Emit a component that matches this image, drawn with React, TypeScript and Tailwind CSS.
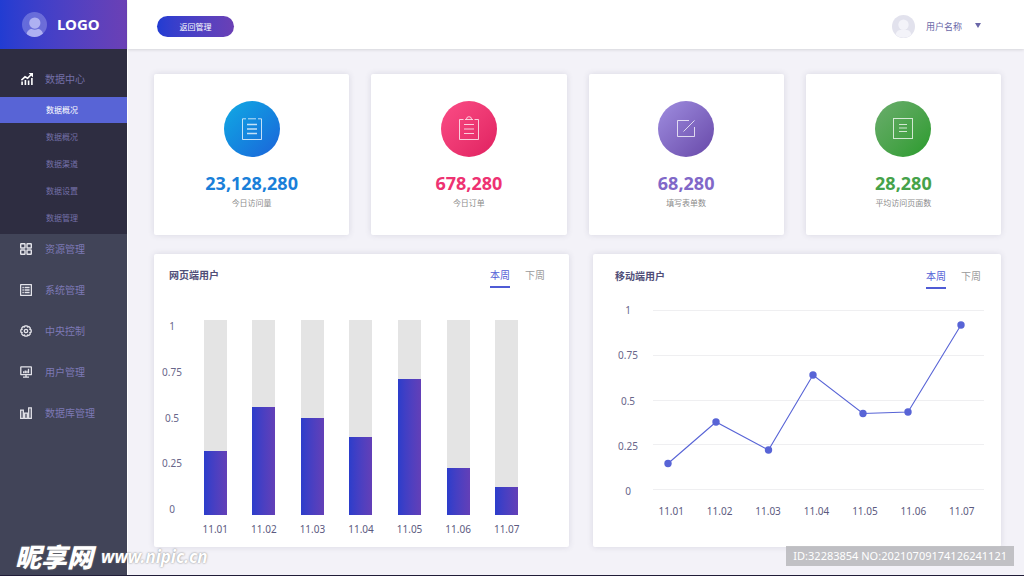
import React, { useState } from 'react';

const subMenu = ['数据概况', '数据概况', '数据渠道', '数据设置', '数据管理'];

const TrendIcon = () => (
  <svg viewBox="0 0 12 12" className="w-3 h-3" fill="none" stroke="currentColor">
    <path d="M1.1 8.6v3.4M4.4 7v5M7.6 7.6v4.4M10.9 5v7" strokeWidth="1.6" />
    <path d="M0.4 7.2 4 3.8l2.6 1.5L10 1.8" strokeWidth="1.6" />
    <path d="M7.6 0H12v4.4z" fill="currentColor" stroke="none" />
  </svg>
);

const GridIcon = () => (
  <svg viewBox="0 0 12 12" className="w-3 h-3" fill="none" stroke="currentColor" strokeWidth="1.4">
    <rect x="0.7" y="0.7" width="4.3" height="4.3" rx="0.5" />
    <rect x="7" y="0.7" width="4.3" height="4.3" rx="0.5" />
    <rect x="0.7" y="7" width="4.3" height="4.3" rx="0.5" />
    <rect x="7" y="7" width="4.3" height="4.3" rx="0.5" />
  </svg>
);

const ListIcon = () => (
  <svg viewBox="0 0 12 12" className="w-3 h-3" fill="none" stroke="currentColor" strokeWidth="1.3">
    <rect x="0.6" y="0.6" width="10.8" height="10.8" rx="0.4" />
    <path d="M2.4 3.5h1.4M4.6 3.5h5M2.4 6h1.4M4.6 6h5M2.4 8.5h1.4M4.6 8.5h5" />
  </svg>
);

const GearIcon = () => (
  <svg viewBox="0 0 12 12" className="w-3 h-3" fill="none" stroke="currentColor" strokeWidth="1.3" strokeLinejoin="round">
    <path d="M4.9 0.8h2.2l.4 1.3 1.3-.6 1.6 1.6-.6 1.3 1.4.5v2.2l-1.4.5.6 1.3-1.6 1.6-1.3-.6-.4 1.3H4.9l-.4-1.3-1.3.6-1.6-1.6.6-1.3L.8 7.1V4.9l1.4-.5-.6-1.3 1.6-1.6 1.3.6z" />
    <circle cx="6" cy="6" r="1.7" />
  </svg>
);

const MonitorIcon = () => (
  <svg viewBox="0 0 12 12" className="w-3 h-3" fill="none" stroke="currentColor" strokeWidth="1.3">
    <rect x="0.8" y="0.8" width="10.6" height="7.9" rx="0.4" />
    <path d="M3.7 7.2V5.2M5.3 7.2V4.4M6.9 7.2V4.8M8.5 7.2V2.8" />
    <path d="M6 8.6v2.4M3 11.2h6" />
  </svg>
);

const BarsIcon = () => (
  <svg viewBox="0 0 12 12" className="w-3 h-3" fill="none" stroke="currentColor" strokeWidth="1.3">
    <path d="M0.7 3.2h2.6v8.1H0.7zM4.7 6.2h2.6v5.1H4.7zM8.7 0.8h2.6v10.5H8.7z" />
  </svg>
);

const menu = [
  { label: '资源管理', icon: <GridIcon /> },
  { label: '系统管理', icon: <ListIcon /> },
  { label: '中央控制', icon: <GearIcon /> },
  { label: '用户管理', icon: <MonitorIcon /> },
  { label: '数据库管理', icon: <BarsIcon /> }
];

const stats = [
  {
    value: '23,128,280',
    label: '今日访问量',
    circle: 'bg-linear-to-br from-[#14aae3] to-[#1d62d9]',
    text: 'text-[#1a7fd9]',
    icon: (
      <>
        <path d="M4 .8H.5v20.7h19V.8H16M6 .8h8" />
        <path d="M5 6.5h10M5 11h10M5 15.5h10" strokeWidth="1.3" />
      </>
    )
  },
  {
    value: '678,280',
    label: '今日订单',
    circle: 'bg-linear-to-br from-[#fb4c86] to-[#e01f60]',
    text: 'text-[#ee3272]',
    icon: (
      <>
        <path d="M4.5 1.5H.5v20h19v-20h-4M6 1.5h8" />
        <path d="M7.5 1.2a2.5 2.5 0 1 1 5 0" />
        <path d="M5 6.5h10M5 11h10M5 15.5h10" strokeWidth="1.2" />
      </>
    )
  },
  {
    value: '68,280',
    label: '填写表单数',
    circle: 'bg-linear-to-br from-[#a08ee0] to-[#6848a8]',
    text: 'text-[#8168c8]',
    icon: (
      <>
        <path d="M13 2.5H1.5v16h17V9" />
        <path d="M7.5 13.5 18.5 2.5" />
      </>
    )
  },
  {
    value: '28,280',
    label: '平均访问页面数',
    circle: 'bg-linear-to-br from-[#6aad6c] to-[#279b2a]',
    text: 'text-[#46a24a]',
    icon: (
      <>
        <rect x=".5" y=".5" width="19" height="20" />
        <path d="M6 6.5h8M6 10h8M6 13.5h8" strokeWidth="1.2" />
      </>
    )
  }
];

const yLabels = ['1', '0.75', '0.5', '0.25', '0'];

const bars = [
  { date: '11.01', value: 33 },
  { date: '11.02', value: 55.5 },
  { date: '11.03', value: 50 },
  { date: '11.04', value: 40 },
  { date: '11.05', value: 70 },
  { date: '11.06', value: 24 },
  { date: '11.07', value: 14.5 }
];

const gridLines = [6.5, 51.5, 96.5, 140.5, 185.5];

const points = [
  [21, 159.5],
  [69, 118],
  [121.5, 146],
  [166, 71],
  [216, 109.5],
  [261, 108],
  [314, 21]
];

const Avatar = ({ className }: { className: string }) => (
  <svg viewBox="0 0 24 24" className={className}>
    <defs>
      <clipPath id="avatar">
        <circle cx="12" cy="12" r="12" />
      </clipPath>
    </defs>
    <circle cx="12" cy="12" r="12" fill="currentColor" opacity="0.3" />
    <g clipPath="url(#avatar)" fill="currentColor" opacity="0.65">
      <circle cx="12.3" cy="10.6" r="5.4" />
      <path d="M4.4 22c0-4 3-5.8 5-5.8 1.6 1 4.2 1 5.8 0 2 0 5 1.8 5 5.8v2H4.4z" />
    </g>
  </svg>
);

const PanelHeader = ({ title }: { title: string }) => {
  const [tab, setTab] = useState('本周');

  return (
    <div className="flex items-start justify-between">
      <h2 className="text-[10px] leading-5 font-bold text-[#504e78]">{title}</h2>
      <div className="flex gap-[15px]">
        {['本周', '下周'].map((name) => (
          <button
            key={name}
            type="button"
            onClick={() => setTab(name)}
            className={
              tab === name
                ? 'pb-px text-[10px] leading-5 text-[#4f5bd5] border-b-2 border-[#4f5bd5]'
                : 'pb-px text-[10px] leading-5 text-[#9a9a9a] border-b-2 border-transparent'
            }
          >
            {name}
          </button>
        ))}
      </div>
    </div>
  );
};

const YAxis = ({ className }: { className: string }) => (
  <div className={`flex flex-col justify-between w-5 shrink-0 text-center text-[10px] leading-3 text-[#68668a] ${className}`}>
    {yLabels.map((label) => (
      <span key={label}>{label}</span>
    ))}
  </div>
);

const App = () => {
  return (
    <div className="relative min-h-screen flex bg-[#f3f2f8] border-b border-[#201d38] font-['Noto_Sans','Noto_Sans_CJK_SC',sans-serif]">
      {/* Sidebar */}
      <aside className="w-[127px] shrink-0 bg-[#414458]">
        <div className="h-[49px] flex items-center gap-[10px] pl-[22px] bg-linear-to-r from-[#213cd2] to-[#6b40b5] text-white">
          <Avatar className="w-[25px] h-[25px] text-[#d5d6ff]" />
          <span className="text-[15px] font-bold">LOGO</span>
        </div>

        <nav>
          <div className="bg-[#2e2d41] pb-[3px]">
            <a href="#data" className="h-12 pt-3 pl-[21px] flex items-center gap-3 text-[10px] text-[#7470a8]">
              <span className="text-white"><TrendIcon /></span>
              数据中心
            </a>
            <ul className="flex flex-col gap-px">
              {subMenu.map((item, index) => (
                <li key={index}>
                  <a
                    href="#sub"
                    className={
                      index === 0
                        ? 'h-[26px] pb-px pl-[46px] flex items-center text-[8px] text-white bg-[#5864d6]'
                        : 'h-[26px] pb-px pl-[46px] flex items-center text-[8px] text-[#7470a8]'
                    }
                  >
                    {item}
                  </a>
                </li>
              ))}
            </ul>
          </div>

          <ul className="pt-px flex flex-col gap-[13px]">
            {menu.map((item) => (
              <li key={item.label}>
                <a href="#menu" className="h-7 pl-5 flex items-center gap-[13px] text-[10px] text-[#7d79b5]">
                  <span className="text-[#e4e4ea]">{item.icon}</span>
                  {item.label}
                </a>
              </li>
            ))}
          </ul>
        </nav>
      </aside>

      <div className="flex-1 min-w-0 border-l border-white">
        {/* Header */}
        <header className="h-[49px] pl-[29px] pr-[43px] pt-1 flex items-center justify-between bg-white shadow-[0_1px_3px_rgba(0,0,0,0.12)]">
          <button type="button" className="w-[77px] h-[21px] rounded-full bg-linear-to-r from-[#213cd2] to-[#6b40b5] text-[8px] text-white">
            返回管理
          </button>
          <button type="button" className="flex items-center text-[9px] text-[#6a67a8]">
            <svg viewBox="0 0 24 24" className="w-[23px] h-[23px] mr-[11px]">
              <circle cx="12" cy="12" r="12" fill="#e2e2ed" />
              <circle cx="12" cy="10.2" r="5.4" fill="#f3f3f9" />
              <path d="M3.8 20.5c.6-3.6 3.2-4.8 5-4.8h6.4c1.8 0 4.4 1.2 5 4.8A12 12 0 0 1 3.8 20.5z" fill="#f3f3f9" />
            </svg>
            用户名称
            <svg viewBox="0 0 6 5" className="w-[6px] h-[5px] ml-[13px] mb-[2px]">
              <path d="M0 0h6L3 5z" fill="currentColor" />
            </svg>
          </button>
        </header>

        <main className="pl-[26px] pr-[23px] pt-[25px] pb-7">
          {/* Stats */}
          <div className="grid grid-cols-4 gap-[22px]">
            {stats.map((stat) => (
              <div key={stat.label} className="h-[161px] pt-[27px] flex flex-col items-center bg-white rounded-xs shadow-[0_0_6px_rgba(60,60,90,0.14)]">
                <div className={`w-14 h-14 rounded-full flex items-center justify-center ${stat.circle}`}>
                  <svg viewBox="0 0 20 22" className="w-5 h-[22px] overflow-visible" fill="none" stroke="#ffffff" strokeOpacity="0.75" strokeWidth="1">
                    {stat.icon}
                  </svg>
                </div>
                <p className={`mt-4 text-[18px] leading-5 font-bold ${stat.text}`}>{stat.value}</p>
                <p className="mt-1 text-[8px] leading-3 text-[#8c8c8c]">{stat.label}</p>
              </div>
            ))}
          </div>

          {/* Charts */}
          <div className="mt-[19px] grid grid-cols-[415fr_408fr] gap-6">
            <section className="pt-[11px] pb-3 bg-white rounded-xs shadow-[0_0_6px_rgba(60,60,90,0.14)]">
              <div className="pl-[15px] pr-6">
                <PanelHeader title="网页端用户" />
              </div>
              <div className="mt-8 pl-2 pr-[38px] flex gap-[9px]">
                <YAxis className="h-[195px]" />
                <div className="flex-1 grid grid-cols-7">
                  {bars.map((bar) => (
                    <div key={bar.date} className="flex flex-col items-center">
                      <div className="w-[23px] h-[195px] flex items-end bg-[#e4e4e4]">
                        <div className="w-full bg-linear-to-r from-[#2b3dcb] to-[#633fb7]" style={{ height: `${bar.value}%` }}></div>
                      </div>
                      <span className="mt-2 text-[10px] leading-3 text-[#5c5a80]">{bar.date}</span>
                    </div>
                  ))}
                </div>
              </div>
            </section>

            <section className="pt-3 pb-[11px] bg-white rounded-xs shadow-[0_0_6px_rgba(60,60,90,0.14)]">
              <div className="pl-[22px] pr-5">
                <PanelHeader title="移动端用户" />
              </div>
              <div className="mt-[15px] pl-[25px] pr-[15px] flex gap-[9px]">
                <YAxis className="h-[193px]" />
                <div className="flex-1">
                  <svg viewBox="0 0 339 193" className="block w-full">
                    {gridLines.map((y) => (
                      <line key={y} x1="6" x2="337" y1={y} y2={y} stroke="#efeff1" />
                    ))}
                    <polyline points={points.map((p) => p.join(',')).join(' ')} fill="none" stroke="#5864d6" strokeWidth="1.1" />
                    {points.map(([x, y]) => (
                      <circle key={x} cx={x} cy={y} r="3.7" fill="#5864d6" />
                    ))}
                  </svg>
                  <div className="mt-2 grid grid-cols-7 text-center text-[10px] leading-3 text-[#5c5a80]">
                    {bars.map((bar) => (
                      <span key={bar.date}>{bar.date}</span>
                    ))}
                  </div>
                </div>
              </div>
            </section>
          </div>
        </main>
      </div>

      {/* Watermarks */}
      <div className="absolute left-[15px] bottom-1 flex items-center gap-2 italic text-white [text-shadow:0_0_2px_#777777]">
        <span className="text-[26px] leading-7 font-black">昵享网</span>
        <span className="text-[17px] leading-7 font-bold">www.nipic.cn</span>
      </div>
      <div className="absolute right-[10px] bottom-[9px] h-5 px-[7px] flex items-center bg-[#b4b4b8]/80 text-[11px] text-white">
        ID:32283854 NO:20210709174126241121
      </div>
    </div>
  );
};

export default App;
